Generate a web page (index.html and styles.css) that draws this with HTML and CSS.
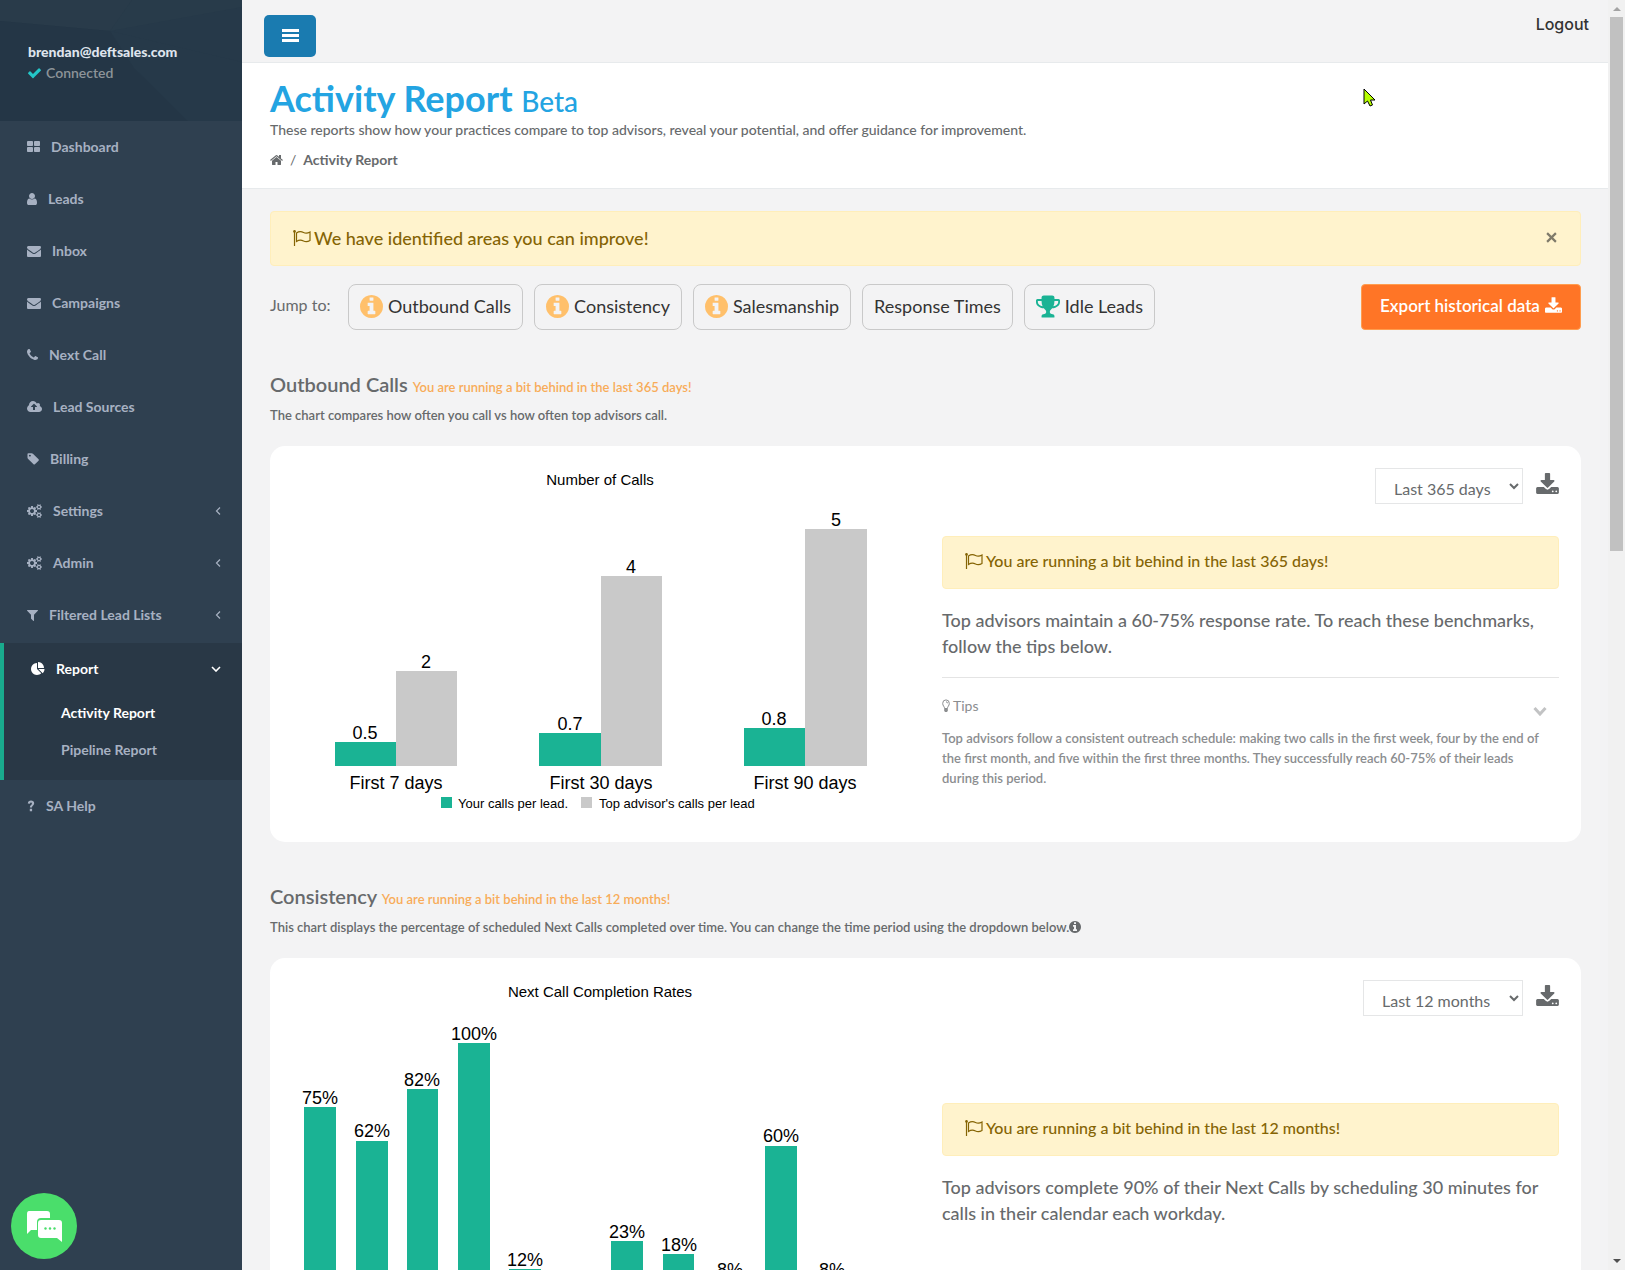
FILE: index.html
```html
<!DOCTYPE html>
<html lang="en">
<head>
<meta charset="utf-8">
<title>Activity Report</title>
<link rel="stylesheet" href="styles.css">
</head>
<body>
<svg class="sprite" aria-hidden="true">
  <symbol id="i-mail" viewBox="0 0 1792 1792"><path d="M1792 710v794q0 66-47 113t-113 47h-1472q-66 0-113-47t-47-113v-794q44 49 101 87 362 246 497 345 57 42 92.500 65.500t94.500 48 110 24.500h2q51 0 110-24.500t94.500-48 92.500-65.500q170-123 498-345 57-39 100-87zm0-294q0 79-49 151t-122 123q-376 261-468 325-10 7-42.500 31t-54 38.500-52 32.500-57.500 27-50 9h-2q-23 0-50-9t-57.500-27-52-32.500-54-38.500-42.500-31q-91-64-262-182.500t-205-142.500q-62-42-117-115.500t-55-136.500q0-78 41.500-130t118.500-52h1472q65 0 112.500 47t47.500 113z"/></symbol>
  <symbol id="i-user" viewBox="256 0 1280 1792"><path d="M1536 1399q0 109-62.500 187t-150.500 78h-854q-88 0-150.500-78t-62.500-187q0-85 8.500-160.500t31.500-152 58.500-131 94-89 134.500-34.500q131 128 313 128t313-128q76 0 134.500 34.500t94 89 58.500 131 31.500 152 8.500 160.500zm-256-887q0 159-112.500 271.500t-271.500 112.500-271.500-112.500-112.500-271.500 112.500-271.500 271.500-112.500 271.500 112.500 112.500 271.500z"/></symbol>
  <symbol id="i-grid" viewBox="64 0 1664 1792"><path d="M832 1024v384q0 52-38 90t-90 38h-512q-52 0-90-38t-38-90v-384q0-52 38-90t90-38h512q52 0 90 38t38 90zm0-768v384q0 52-38 90t-90 38h-512q-52 0-90-38t-38-90v-384q0-52 38-90t90-38h512q52 0 90 38t38 90zm896 768v384q0 52-38 90t-90 38h-512q-52 0-90-38t-38-90v-384q0-52 38-90t90-38h512q52 0 90 38t38 90zm0-768v384q0 52-38 90t-90 38h-512q-52 0-90-38t-38-90v-384q0-52 38-90t90-38h512q52 0 90 38t38 90z"/></symbol>
  <symbol id="i-phone" viewBox="192 0 1408 1792"><path d="M1600 1240q0 27-10 70.500t-21 68.500q-21 50-122 106-94 51-186 51-27 0-53-3.500t-57.500-12.500-47-14.500-55.500-20.500-49-18q-98-35-175-83-127-79-264-216t-216-264q-48-77-83-175-3-9-18-49t-20.500-55.500-14.500-47-12.500-57.500-3.500-53q0-92 51-186 56-101 106-122 25-11 68.500-21t70.500-10q14 0 21 3 18 6 53 76 11 19 30 54t35 63.500 31 53.500q3 4 17.500 25t21.500 35.500 7 28.500q0 20-28.500 50t-62 55-62 53-28.500 46q0 9 5 22.500t8.500 20.500 14 24 11.500 19q76 137 174 235t235 174q2 1 19 11.500t24 14 20.500 8.500 22.500 5q18 0 46-28.500t53-62 55-62 50-28.500q14 0 28.500 7t35.500 21.500 25 17.500q25 15 53.500 31t63.500 35 54 30q70 35 76 53 3 7 3 21z"/></symbol>
  <symbol id="i-cloud" viewBox="-64 0 1920 1792"><path d="M1216 864q0-14-9-23l-352-352q-9-9-23-9t-23 9l-351 351q-10 12-10 24 0 14 9 23t23 9h224v352q0 13 9.500 22.500t22.500 9.500h192q13 0 22.500-9.500t9.500-22.500v-352h224q13 0 22.500-9.500t9.500-22.500zm640 288q0 159-112.500 271.500t-271.500 112.500h-1088q-185 0-316.500-131.500t-131.500-316.500q0-130 70-240t188-165q-2-30-2-43 0-212 150-362t362-150q156 0 285.500 87t188.500 231q71-62 166-62 106 0 181 75t75 181q0 76-41 138 130 31 213.500 135.500t83.500 238.500z"/></symbol>
  <symbol id="i-tag" viewBox="64 0 1600 1792"><path d="M576 448q0-53-37.500-90.500t-90.500-37.500-90.500 37.500-37.500 90.500 37.500 90.500 90.500 37.500 90.500-37.500 37.500-90.500zm1067 576q0 53-37 90l-491 492q-39 37-91 37-53 0-90-37l-715-716q-38-37-64.500-101t-26.500-117v-416q0-52 38-90t90-38h416q53 0 117 26.500t102 64.500l715 714q37 39 37 91z"/></symbol>
  <symbol id="i-cogs" viewBox="0 0 1920 1792"><path d="M896 896q0-106-75-181t-181-75-181 75-75 181 75 181 181 75 181-75 75-181zm768 512q0-52-38-90t-90-38-90 38-38 90q0 53 37.500 90.500t90.500 37.500 90.500-37.500 37.500-90.500zm0-1024q0-52-38-90t-90-38-90 38-38 90q0 53 37.500 90.500t90.500 37.500 90.500-37.500 37.500-90.500zm-384 421v185q0 10-7 19.500t-16 10.500l-155 24q-11 35-32 76 34 48 90 115 7 11 7 20 0 12-7 19-23 30-82.500 89.500t-78.500 59.500q-11 0-21-7l-115-90q-37 19-77 31-11 108-23 155-7 24-30 24h-186q-11 0-20-7.500t-10-17.500l-23-153q-34-10-75-31l-118 89q-7 7-20 7-11 0-21-8-144-133-144-160 0-9 7-19 10-14 41-53t47-61q-23-44-35-82l-152-24q-10-1-17-9.500t-7-19.500v-185q0-10 7-19.500t16-10.500l155-24q11-35 32-76-34-48-90-115-7-11-7-20 0-12 7-20 22-30 82-89t79-59q11 0 21 7l115 90q34-18 77-32 11-108 23-154 7-24 30-24h186q11 0 20 7.500t10 17.500l23 153q34 10 75 31l118-89q8-7 20-7 11 0 21 8 144 133 144 160 0 8-7 19-12 16-42 54t-45 60q23 48 34 82l152 23q10 2 17 10.500t7 19.500zm640 533v140q0 16-149 31-12 27-30 52 51 113 51 138 0 4-4 7-122 71-124 71-8 0-46-47t-52-68q-20 2-30 2t-30-2q-14 21-52 68t-46 47q-2 0-124-71-4-3-4-7 0-25 51-138-18-25-30-52-149-15-149-31v-140q0-16 149-31 13-29 30-52-51-113-51-138 0-4 4-7 4-2 35-20t59-34 30-16q8 0 46 46.500t52 67.500q20-2 30-2t30 2q51-71 92-112l6-2q4 0 124 70 4 3 4 7 0 25-51 138 17 23 30 52 149 15 149 31zm0-1024v140q0 16-149 31-12 27-30 52 51 113 51 138 0 4-4 7-122 71-124 71-8 0-46-47t-52-68q-20 2-30 2t-30-2q-14 21-52 68t-46 47q-2 0-124-71-4-3-4-7 0-25 51-138-18-25-30-52-149-15-149-31v-140q0-16 149-31 13-29 30-52-51-113-51-138 0-4 4-7 4-2 35-20t59-34 30-16q8 0 46 46.500t52 67.500q20-2 30-2t30 2q51-71 92-112l6-2q4 0 124 70 4 3 4 7 0 25-51 138 17 23 30 52 149 15 149 31z"/></symbol>
  <symbol id="i-filter" viewBox="192 0 1408 1792"><path d="M1595 295q17 41-14 70l-493 493v742q0 42-39 59-13 5-25 5-27 0-45-19l-256-256q-19-19-19-45v-486l-493-493q-31-29-14-70 17-39 59-39h1280q42 0 59 39z"/></symbol>
  <symbol id="i-pie" viewBox="0 0 1792 1792"><path d="M768 890l546 546q-106 108-247.500 168t-298.500 60q-209 0-385.500-103t-279.500-279.500-103-385.500 103-385.500 279.500-279.500 385.500-103v762zm187 6h773q0 157-60 298.500t-168 247.500zm709-128h-768v-768q209 0 385.500 103t279.500 279.500 103 385.500z"/></symbol>
  <symbol id="i-help" viewBox="0 0 8 14"><path d="M.8 4.400C1 2.500 2.200 1.600 4 1.600S7.200 2.700 7.200 4.300C7.200 6.400 5 6.500 5 8.600H2.900C2.900 6 4.900 6 4.900 4.500 4.900 3.900 4.500 3.600 4 3.600S3.100 4 3 4.800ZM2.800 9.800H5.100V12.200H2.800Z"/></symbol>
  <symbol id="i-info" viewBox="128 128 1536 1536"><path d="M1152 1376v-160q0-14-9-23t-23-9h-96v-512q0-14-9-23t-23-9h-320q-14 0-23 9t-9 23v160q0 14 9 23t23 9h96v320h-96q-14 0-23 9t-9 23v160q0 14 9 23t23 9h448q14 0 23-9t9-23zm-128-896v-160q0-14-9-23t-23-9h-192q-14 0-23 9t-9 23v160q0 14 9 23t23 9h192q14 0 23-9t9-23zm640 416q0 209-103 385.500t-279.500 279.500-385.500 103-385.500-103-279.500-279.500-103-385.500 103-385.500 279.500-279.500 385.500-103 385.500 103 279.500 279.500 103 385.500z"/></symbol>
  <symbol id="i-home" viewBox="64 0 1664 1792"><path d="M1472 992v480q0 26-19 45t-45 19h-384v-384h-256v384h-384q-26 0-45-19t-19-45v-480q0-1 .5-3t.5-3l575-474 575 474q1 2 1 6zm223-69l-62 74q-8 9-21 11h-3q-13 0-21-7l-692-577-692 577q-12 8-24 7-13-2-21-11l-62-74q-8-10-7-23.500t11-21.500l719-599q32-26 76-26t76 26l244 204v-195q0-14 9-23t23-9h192q14 0 23 9t9 23v408l219 182q10 8 11 21.500t-7 23.500z"/></symbol>
  <symbol id="i-check" viewBox="121 100 1550 1600"><path d="M1671 566q0 40-28 68l-724 724-136 136q-28 28-68 28t-68-28l-136-136-362-362q-28-28-28-68t28-68l136-136q28-28 68-28t68 28l294 295 656-657q28-28 68-28t68 28l136 136q28 28 28 68z"/></symbol>
  <symbol id="i-trophy" viewBox="64 128 1664 1536"><path d="M522 883q-74-162-74-371h-256v96q0 78 94.500 162t235.500 113zm1078-275v-96h-256q0 209-74 371 141-29 235.500-113t94.500-162zm128-128v128q0 71-41.500 143t-112 130-173 97.500-215.500 44.500q-42 54-95 95-38 34-52.500 72.500t-14.500 89.500q0 54 30.500 91t97.500 37q75 0 133.500 45.500t58.500 114.500v64q0 14-9 23t-23 9h-832q-14 0-23-9t-9-23v-64q0-69 58.500-114.500t133.500-45.500q67 0 97.500-37t30.500-91q0-51-14.500-89.500t-52.500-72.500q-53-41-95-95-113-5-215.500-44.500t-173-97.500-112-130-41.500-143v-128q0-40 28-68t68-28h288v-96q0-66 47-113t113-47h576q66 0 113 47t47 113v96h288q40 0 68 28t28 68z"/></symbol>
  <symbol id="i-download" viewBox="64 0 1664 1536"><path d="M1344 1344q0-26-19-45t-45-19-45 19-19 45 19 45 45 19 45-19 19-45zm256 0q0-26-19-45t-45-19-45 19-19 45 19 45 45 19 45-19 19-45zm128-224v320q0 40-28 68t-68 28h-1472q-40 0-68-28t-28-68v-320q0-40 28-68t68-28h465l135 136q58 56 136 56t136-56l136-136h464q40 0 68 28t28 68zm-325-569q17 41-14 70l-448 448q-18 19-45 19t-45-19l-448-448q-31-29-14-70 17-39 59-39h256v-448q0-26 19-45t45-19h256q26 0 45 19t19 45v448h256q42 0 59 39z"/></symbol>
  <symbol id="i-flag" viewBox="0 0 18 16"><path d="M1.500 1V16M3.500 3C6.500 1 8.500 1.500 10.500 2.500S14.500 3.500 17 2V10.500C14.500 12 12.500 12 10.500 11S6.500 9.500 3.500 11.500Z" fill="none" stroke="currentColor" stroke-width="1.200"/><circle cx="1.500" cy="1.400" r="1.300"/></symbol>
  <symbol id="i-bulb" viewBox="0 0 8 14"><path d="M2.600 9.500C2.600 7.600.7 6.900.7 4.400A3.300 3.500 0 0 1 7.300 4.400C7.300 6.900 5.400 7.600 5.400 9.500ZM4 2.800A1.500 1.500 0 0 1 5.500 4.300" fill="none" stroke="currentColor"/><path d="M2.200 9.500H5.800V12L4.800 13H3.200L2.200 12Z"/></symbol>
  <symbol id="i-left" viewBox="0 0 6 10"><path d="M5 1.500L1.500 5L5 8.500" fill="none" stroke="currentColor" stroke-width="1.200"/></symbol>
  <symbol id="i-down" viewBox="0 0 10 6"><path d="M1 1L5 5L9 1" fill="none" stroke="currentColor" stroke-width="1.600"/></symbol>
</svg>

<div class="app">
  <aside class="sidebar">
    <div class="profile">
      <svg class="facets" viewBox="0 0 242 121" preserveAspectRatio="none" aria-hidden="true">
        <path class="f1" d="M132 0L110 31L0 21V0Z"/><path class="f2" d="M132 0L110 31L242 7V0Z"/><path class="f3" d="M0 21L110 31L134 68L188 121H0Z"/><path class="f4" d="M110 31L242 62V121H188L134 68Z"/>
      </svg>
      <strong class="email">brendan@deftsales.com</strong>
      <span class="status"><svg class="icon check"><use href="#i-check"/></svg>Connected</span>
    </div>
    <nav class="nav">
      <a href="#"><svg class="icon w13"><use href="#i-grid"/></svg>Dashboard</a>
      <a href="#"><svg class="icon w10"><use href="#i-user"/></svg>Leads</a>
      <a href="#"><svg class="icon w14"><use href="#i-mail"/></svg>Inbox</a>
      <a href="#"><svg class="icon w14"><use href="#i-mail"/></svg>Campaigns</a>
      <a href="#"><svg class="icon w11"><use href="#i-phone"/></svg>Next Call</a>
      <a href="#"><svg class="icon w15"><use href="#i-cloud"/></svg>Lead Sources</a>
      <a href="#"><svg class="icon w12"><use href="#i-tag"/></svg>Billing</a>
      <a href="#"><svg class="icon w15"><use href="#i-cogs"/></svg>Settings<svg class="arrow"><use href="#i-left"/></svg></a>
      <a href="#"><svg class="icon w15"><use href="#i-cogs"/></svg>Admin<svg class="arrow"><use href="#i-left"/></svg></a>
      <a href="#"><svg class="icon w11"><use href="#i-filter"/></svg>Filtered Lead Lists<svg class="arrow"><use href="#i-left"/></svg></a>
      <div class="group">
        <a class="current" href="#"><svg class="icon w14"><use href="#i-pie"/></svg>Report<svg class="arrow open"><use href="#i-down"/></svg></a>
        <div class="sub">
          <a class="current" href="#">Activity Report</a>
          <a href="#">Pipeline Report</a>
        </div>
      </div>
      <a href="#"><svg class="icon w8"><use href="#i-help"/></svg>SA Help</a>
    </nav>
    <button class="chat" aria-label="Open chat">
      <svg viewBox="0 0 36 32"><path d="M3 1H21Q24 1 24 4V8H15Q11 8 11 12V20H5L1 24V4Q1 1 3 1Z"/><path d="M15 10H33Q36 10 36 13V32L31 28H15Q12 28 12 25V13Q12 10 15 10Z"/><g class="dots"><circle cx="19.500" cy="18.500" r="1.200"/><circle cx="24" cy="18.500" r="1.200"/><circle cx="28.500" cy="18.500" r="1.200"/></g></svg>
    </button>
  </aside>

  <main class="main">
    <div class="topbar">
      <button class="menu" aria-label="Toggle menu"><svg viewBox="0 0 17 14"><path d="M0 0H17V3H0ZM0 5H17V8H0ZM0 10H17V13H0Z"/></svg></button>
      <a class="logout" href="#">Logout</a>
    </div>
    <header class="page-head">
      <h1>Activity Report <small>Beta</small></h1>
      <p>These reports show how your practices compare to top advisors, reveal your potential, and offer guidance for improvement.</p>
      <div class="crumbs"><a href="#" aria-label="Home"><svg class="icon w13"><use href="#i-home"/></svg></a><span>/</span><strong>Activity Report</strong></div>
    </header>

    <div class="content">
      <div class="alert wide"><svg class="flag"><use href="#i-flag"/></svg>We have identified areas you can improve!<button class="close" aria-label="Dismiss"><svg viewBox="0 0 10 10"><path d="M1 1L9 9M9 1L1 9"/></svg></button></div>

      <div class="jump">
        <span class="jump-label">Jump to:</span>
        <a class="pill" href="#calls"><svg class="warn"><use href="#i-info"/></svg>Outbound Calls</a>
        <a class="pill" href="#consistency"><svg class="warn"><use href="#i-info"/></svg>Consistency</a>
        <a class="pill" href="#"><svg class="warn"><use href="#i-info"/></svg>Salesmanship</a>
        <a class="pill" href="#">Response Times</a>
        <a class="pill" href="#"><svg class="cup"><use href="#i-trophy"/></svg>Idle Leads</a>
        <button class="export">Export historical data<svg><use href="#i-download"/></svg></button>
      </div>

      <section id="calls">
        <h2>Outbound Calls <small>You are running a bit behind in the last 365 days!</small></h2>
        <p class="lead">The chart compares how often you call vs how often top advisors call.</p>
        <div class="card">
          <svg class="chart" viewBox="0 0 617 352" role="img" aria-label="Number of Calls">
            <text class="c-title" x="308" y="17">Number of Calls</text>
            <g class="mine"><path d="M43 274h61v24h-61zM247 265h62v33h-62zM452 260h61v38h-61z"/></g>
            <g class="top"><path d="M104 203h61v95h-61zM309 108h61v190h-61zM513 61h62v237h-62z"/></g>
            <g class="c-label">
              <text x="73" y="271">0.5</text><text x="134" y="200">2</text><text x="278" y="262">0.7</text><text x="339" y="105">4</text><text x="482" y="257">0.8</text><text x="544" y="58">5</text>
              <text x="104" y="321">First 7 days</text><text x="309" y="321">First 30 days</text><text x="513" y="321">First 90 days</text>
            </g>
            <path class="mine" d="M149 329h11v11h-11z"/><path class="top" d="M289 329h11v11h-11z"/>
            <g class="c-legend"><text x="166" y="340">Your calls per lead.</text><text x="307" y="340">Top advisor's calls per lead</text></g>
          </svg>
          <div class="advice">
            <div class="tools">
              <select aria-label="Period"><option>Last 365 days</option></select>
              <button class="dl" aria-label="Download"><svg><use href="#i-download"/></svg></button>
            </div>
            <div class="alert"><svg class="flag"><use href="#i-flag"/></svg>You are running a bit behind in the last 365 days!</div>
            <p class="bench">Top advisors maintain a 60-75% response rate. To reach these benchmarks, follow the tips below.</p>
            <div class="tips-head"><span><svg class="bulb"><use href="#i-bulb"/></svg>Tips</span><svg class="tips-arrow" viewBox="0 0 14 10"><path d="M1.500 2L7 8L12.500 2"/></svg></div>
            <p class="tips">Top advisors follow a consistent outreach schedule: making two calls in the first week, four by the end of the first month, and five within the first three months. They successfully reach 60-75% of their leads during this period.</p>
          </div>
        </div>
      </section>

      <section id="consistency">
        <h2>Consistency <small>You are running a bit behind in the last 12 months!</small></h2>
        <p class="lead">This chart displays the percentage of scheduled Next Calls completed over time. You can change the time period using the dropdown below.<svg><use href="#i-info"/></svg></p>
        <div class="card">
          <svg class="chart" viewBox="0 0 617 352" role="img" aria-label="Next Call Completion Rates">
            <text class="c-title" x="308" y="17">Next Call Completion Rates</text>
            <path class="mine" d="M12 127h32v193h-32zM64 161h32v159h-32zM115 109h31v211h-31zM166 63h32v257h-32zM217 289h32v31h-32zM319 261h32v59h-32zM371 274h31v46h-31zM422 299h32v21h-32zM473 166h32v154h-32zM524 299h32v21h-32z"/>
            <g class="c-label">
              <text x="28" y="124">75%</text><text x="80" y="157">62%</text><text x="130" y="106">82%</text><text x="182" y="60">100%</text><text x="233" y="286">12%</text><text x="335" y="258">23%</text><text x="387" y="271">18%</text><text x="438" y="296">8%</text><text x="489" y="162">60%</text><text x="540" y="296">8%</text>
            </g>
          </svg>
          <div class="advice spaced">
            <div class="tools">
              <select aria-label="Period"><option>Last 12 months</option></select>
              <button class="dl" aria-label="Download"><svg><use href="#i-download"/></svg></button>
            </div>
            <div class="alert"><svg class="flag"><use href="#i-flag"/></svg>You are running a bit behind in the last 12 months!</div>
            <p class="bench">Top advisors complete 90% of their Next Calls by scheduling 30 minutes for calls in their calendar each workday.</p>
          </div>
        </div>
      </section>
    </div>
  </main>

  <div class="scrollbar" aria-hidden="true"><i class="up"></i><i class="thumb"></i><i class="down"></i></div>
</div>
<svg class="cursor" viewBox="0 0 13 19" aria-hidden="true"><path d="M1 1V16L4.500 13L7 18L9.500 17L7.500 12H12Z"/></svg>
</body>
</html>
```
FILE: styles.css
```css
* { box-sizing: border-box; }
body { margin: 0; font: 14px/20px Lato, "Open Sans", sans-serif; color: #676a6c; background: #f3f3f4; }
a { color: inherit; text-decoration: none; }
h1, h2, p { margin: 0; font-weight: 500; }
button, select { font: inherit; color: inherit; margin: 0; padding: 0; border: 0; background: none; }
svg { fill: currentColor; }
.sprite { position: absolute; width: 0; height: 0; }
.app { display: grid; grid-template-columns: 242px minmax(0, 1fr) 17px; height: 100vh; overflow: hidden; }
.icon { height: 14px; flex: none; }
.w8 { width: 8px; } .w10 { width: 10px; } .w11 { width: 11px; } .w12 { width: 12px; }
.w13 { width: 13px; } .w14 { width: 14px; } .w15 { width: 15px; }

.sidebar { position: relative; background: #2f4050; color: #a7b1c2; font-weight: 700; }
.profile { position: relative; height: 121px; padding: 42px 28px 0; display: flex; flex-direction: column; background: #263949; }
.facets { position: absolute; inset: 0; width: 100%; height: 100%; }
.f1 { fill: #293b4a; } .f2 { fill: #283b4a; } .f3 { fill: #243646; } .f4 { fill: #263949; }
.email { position: relative; color: #dfe4ed; }
.status { position: relative; display: flex; align-items: center; gap: 5px; height: 22px; color: #8d9499; font-weight: 600; }
.check { width: 13px; color: #23c6c8; }
.nav { display: flex; flex-direction: column; }
.nav a { display: flex; align-items: center; gap: 11px; height: 52px; padding: 0 21px 0 27px; }
.arrow { width: 6px; height: 10px; margin-left: auto; }
.arrow.open { width: 10px; height: 6px; }
.group { margin-top: 2px; padding-bottom: 11px; border-left: 4px solid #19aa8d; background: #293846; }
.sub a { height: 37px; padding: 0 0 2px 57px; }
.nav .current { color: #fff; }
.chat { position: absolute; left: 11px; bottom: 11px; width: 66px; height: 66px; border-radius: 50%; background: #4ade6b; color: #fff; display: grid; place-items: center; }
.chat svg { width: 36px; height: 32px; }
.dots { fill: #4ade6b; }

.main { min-width: 0; overflow: hidden; }
.topbar { display: flex; justify-content: space-between; height: 63px; padding: 15px 19px 0 22px; border-bottom: 1px solid #e7eaec; }
.menu { width: 52px; height: 42px; border-radius: 5px; background: #1a7bb0; color: #fff; display: grid; place-items: center; }
.menu svg { width: 17px; height: 14px; }
.logout { font: 500 16px/18px Inter, sans-serif; color: #333; }
.page-head { height: 126px; padding: 16px 28px 0; background: #fff; border-bottom: 1px solid #e7eaec; }
h1 { font-size: 36px; line-height: 38px; color: #23a4e2; font-weight: 700; }
h1 small { font-size: 28px; font-weight: 500; }
.page-head p { line-height: 20px; }
.crumbs { display: flex; align-items: center; gap: 7px; margin-top: 10px; line-height: 20px; }
.crumbs a { display: flex; }
.content { padding: 22px 27px 0 28px; }

.alert { display: flex; align-items: center; height: 53px; padding: 0 22px 4px; border: 1px solid #ffeeba; border-radius: 4px; background: #fff3cd; color: #856404; font-size: 16px; font-weight: 500; }
.alert.wide { height: 55px; padding-bottom: 2px; font-size: 18px; }
.flag { width: 18px; height: 16px; margin-right: 3px; flex: none; }
.close { margin-left: auto; display: flex; padding-right: 1px; color: #7f7a6a; }
.close svg { width: 11px; height: 11px; fill: none; stroke: currentColor; stroke-width: 2; }
.jump { display: flex; gap: 11px; margin-top: 18px; height: 46px; font-size: 18px; }
.jump-label { width: 67px; line-height: 42px; font-size: 16px; }
.pill { display: flex; align-items: center; gap: 5px; padding: 0 11px 2px; border: 1px solid #c9c9c9; border-radius: 8px; color: #333; }
.warn { width: 23px; height: 23px; color: #ffc06b; }
.cup { width: 24px; height: 23px; color: #1ab394; }
.export { display: flex; align-items: center; justify-content: center; gap: 5px; width: 220px; margin-left: auto; padding-bottom: 2px; border: 1px solid #ff9d4f; border-radius: 4px; background: #ff7526; color: #fff; font-size: 17px; font-weight: 600; }
.export svg { width: 17px; height: 16px; margin-bottom: 3px; }

section { padding-top: 42px; }
h2 { font-size: 20px; line-height: 24px; font-weight: 600; }
h2 small { font-size: 13px; font-weight: 600; color: #f8ac59; }
.lead { display: flex; align-items: center; margin-top: 6px; font-size: 13px; font-weight: 600; line-height: 20px; }
.lead svg { width: 12px; height: 12px; }
.card { display: grid; grid-template-columns: 1fr 1fr; gap: 33px; align-items: start; min-height: 396px; margin-top: 21px; padding: 22px; border-radius: 15px; background: #fff; }
.chart { display: block; width: 100%; font-family: "Liberation Sans", Arial, sans-serif; fill: #000; text-anchor: middle; }
.c-title { font-size: 15px; }
.c-label { font-size: 18px; }
.c-legend { font-size: 13px; text-anchor: start; }
.mine { fill: #1ab394; }
.top { fill: #c9c9c9; }
.tools { display: flex; justify-content: flex-end; gap: 13px; }
.tools select { height: 36px; padding: 4px 15px 0 14px; border: 1px solid #e5e6e7; background: #fff; font-size: 16px; }
.dl { display: flex; padding-top: 5px; }
.dl svg { width: 23px; height: 21px; }
.advice .alert { margin-top: 32px; }
.advice.spaced .alert { margin-top: 87px; }
.bench { margin-top: 18px; font-size: 18px; line-height: 26px; }
.tips-head { display: flex; align-items: flex-end; justify-content: space-between; margin-top: 18px; padding: 18px 12px 0 0; border-top: 1px solid #e4e4e4; color: #8b8d8f; }
.tips-head span { display: flex; align-items: center; gap: 3px; }
.bulb { width: 8px; height: 14px; }
.tips-arrow { width: 14px; height: 10px; fill: none; stroke: #c2c3c4; stroke-width: 3; }
.tips { margin-top: 12px; padding-right: 8px; font-size: 13px; font-weight: 600; line-height: 20px; color: #8b8d8f; }

.scrollbar { display: flex; flex-direction: column; align-items: center; background: #f1f1f1; padding: 7px 0; }
.up { border: 4px solid transparent; border-top: 0; border-bottom-color: #a3a3a3; margin-bottom: 6px; }
.thumb { width: 13px; height: 42.5%; background: #c1c1c1; }
.down { border: 4px solid transparent; border-bottom: 0; border-top-color: #505050; margin-top: auto; }
.cursor { position: absolute; left: 1363px; top: 88px; width: 13px; height: 19px; fill: #b6ff00; stroke: #000; }
```
